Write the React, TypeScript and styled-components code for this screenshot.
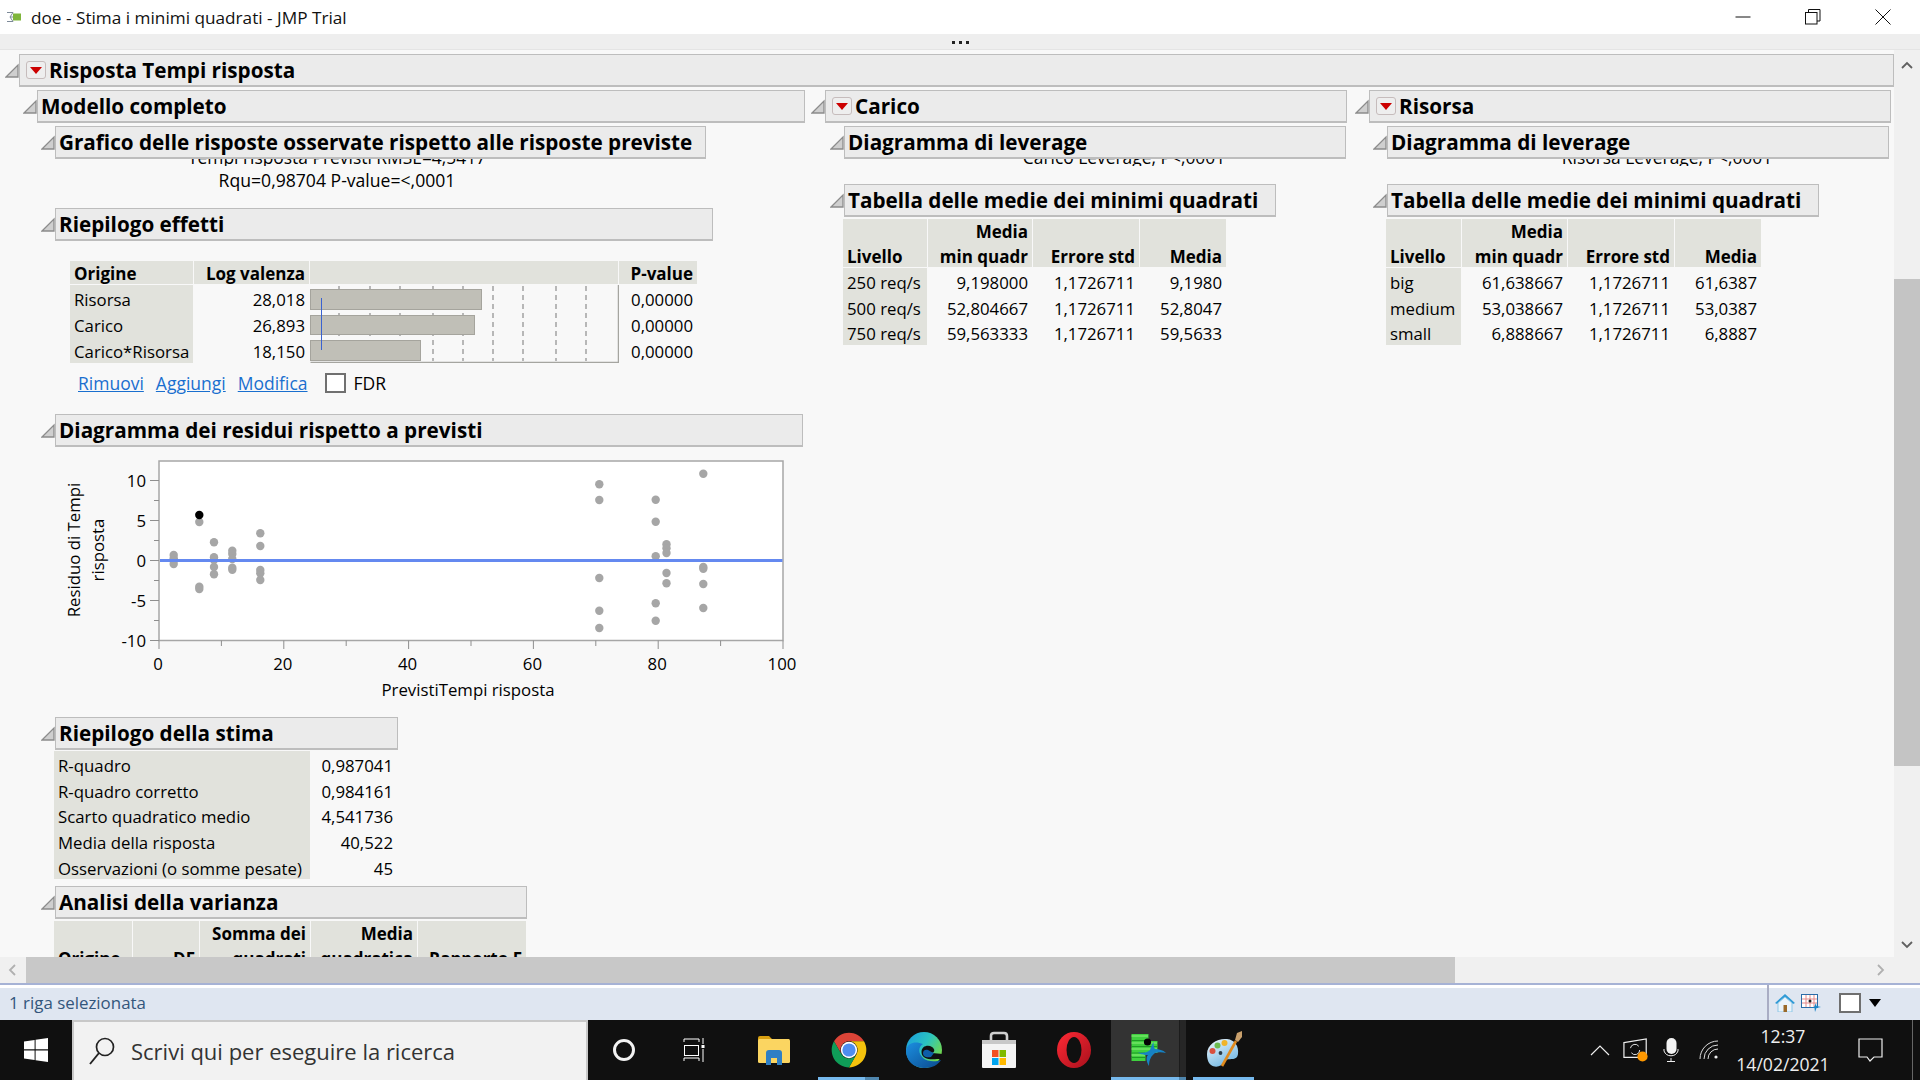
import React from 'react';
import styled, { createGlobalStyle } from 'styled-components';

const GlobalStyle = createGlobalStyle`
  html, body { margin: 0; padding: 0; background: #f8f8f8; }
  body { font-family: "Open Sans", "Noto Sans", sans-serif; color: #000; overflow: hidden; }
`;

const Page = styled.div`
  width: 1920px;
  height: 1080px;
  display: flex;
  flex-direction: column;
  overflow: hidden;
`;

const TitleBar = styled.div`
  height: 34px;
  background: #fff;
  display: flex;
  align-items: center;
  padding-left: 7px;
  font-size: 17.2px;
  flex: none;
`;

const TitleText = styled.span`
  margin-left: 10px;
  color: #111;
`;

const WindowButtons = styled.div`
  margin-left: auto;
  display: flex;
  align-items: center;
  padding-right: 29px;
  gap: 54px;
`;

const ToolStrip = styled.div`
  height: 16px;
  background: #eeeeee;
  border-bottom: 1px solid #e4e4e4;
  flex: none;
  display: flex;
  justify-content: center;
  align-items: flex-end;
  gap: 4px;
  padding-bottom: 5px;
  box-sizing: border-box;
`;

const ToolDot = styled.i`
  width: 3px;
  height: 3px;
  background: #222;
  display: block;
`;

const Main = styled.div`
  height: 907px;
  flex: none;
  display: flex;
`;

const Content = styled.div`
  width: 1894px;
  height: 907px;
  overflow: hidden;
  background: #f8f8f8;
  padding: 4px 0 0 5px;
  box-sizing: border-box;
`;

const VScroll = styled.div`
  width: 26px;
  background: #f0f0f0;
  display: flex;
  flex-direction: column;
  align-items: center;
  padding-top: 11px;
  box-sizing: border-box;
`;

const VThumb = styled.div`
  width: 26px;
  height: 487px;
  background: #c4c4c4;
  margin: 210px 0 175px;
`;

const HScroll = styled.div`
  height: 26px;
  flex: none;
  background: #f0f0f0;
  display: flex;
  align-items: center;
  padding-left: 8px;
  box-sizing: border-box;
`;

const HThumb = styled.div`
  width: 1429px;
  height: 26px;
  background: #c8c8c8;
  margin: 0 422px 0 10px;
`;

const StatusBar = styled.div`
  height: 37px;
  flex: none;
  border-top: 2px solid #a6b2d5;
  box-sizing: border-box;
  background: #fff;
`;

const StatusInner = styled.div`
  height: 32px;
  margin-top: 3px;
  background: #dfe6f1;
  display: flex;
  align-items: center;
  padding-left: 9px;
  font-size: 16.9px;
  color: #34567c;
`;

const StatusText = styled.span`
  margin-bottom: 4px;
`;

const StatusTools = styled.div`
  margin-left: auto;
  width: 153px;
  height: 35px;
  margin-top: -3px;
  border-left: 2px solid #a9adc4;
  box-sizing: border-box;
  display: flex;
  align-items: center;
  padding-left: 6px;
`;

const StatusCheck = styled.div`
  width: 22px;
  height: 20px;
  background: #fff;
  border: 2px solid #6f6f6f;
  box-sizing: border-box;
  margin: 0 8px 0 18px;
`;

const Taskbar = styled.div`
  height: 60px;
  flex: none;
  background: #101010;
  display: flex;
  color: #fff;
  position: relative;
`;

const StartSlot = styled.div`
  width: 72px;
  display: flex;
  align-items: center;
  justify-content: center;
`;

const SearchBox = styled.div`
  width: 516px;
  box-sizing: border-box;
  background: #f2f2f2;
  border: 2px solid #c8c8c8;
  border-bottom: none;
  display: flex;
  align-items: center;
  padding-left: 15px;
  gap: 16px;
  font-size: 22px;
  color: #333;
`;

const TaskSlot = styled.div<{ $w?: number; $on?: boolean; $active?: boolean; $pad?: number }>`
  width: ${(p) => p.$w ?? 75}px;
  box-sizing: border-box;
  padding-right: ${(p) => p.$pad ?? 0}px;
  display: flex;
  align-items: center;
  justify-content: center;
  position: relative;
  background: ${(p) => (p.$active ? '#333' : 'transparent')};
  ${(p) =>
    p.$on
      ? `&::after {
    content: '';
    position: absolute;
    left: ${p.$active ? 0 : 7}px;
    right: ${p.$active ? 0 : 7}px;
    bottom: 0;
    height: 3px;
    background: #76b9ed;
  }`
      : ''}
`;

const StackEdge = styled.span<{ $right: number; $w: number; $tile?: boolean }>`
  position: absolute;
  top: ${(p) => (p.$tile ? 0 : 'auto')};
  bottom: 0;
  right: ${(p) => p.$right}px;
  width: ${(p) => p.$w}px;
  height: ${(p) => (p.$tile ? '100%' : '3px')};
  background: ${(p) => (p.$tile ? '#262626' : '#4f86ae')};
  border-left: ${(p) => (p.$tile ? '1px solid #1c1c1c' : 'none')};
  box-sizing: border-box;
  z-index: 1;
`;

const Tray = styled.div`
  margin-left: auto;
  display: flex;
  align-items: center;
  width: 332px;
  box-sizing: border-box;
  position: relative;
`;

const TrayItem = styled.div<{ $w: number }>`
  width: ${(p) => p.$w}px;
  display: flex;
  align-items: center;
  justify-content: center;
`;

const Clock = styled.div`
  width: 94px;
  text-align: center;
  font-size: 17.6px;
  line-height: 28px;
  color: #eee;
  white-space: nowrap;
`;

const DesktopEdge = styled.div`
  position: absolute;
  right: 7px;
  top: 0;
  bottom: 0;
  width: 1px;
  background: #666;
`;

/* outline tree */
const Row = styled.div<{ $top?: number }>`
  display: flex;
  align-items: center;
  margin-top: ${(p) => p.$top ?? 0}px;
`;

const Bar = styled.div<{ $w: number }>`
  width: ${(p) => p.$w}px;
  height: 33px;
  box-sizing: border-box;
  flex: none;
  background: #ebebeb;
  border: 1px solid #bdbdbd;
  border-bottom-width: 2px;
  padding-left: 3px;
  display: flex;
  align-items: center;
  gap: 3px;
  font-weight: 700;
  font-size: 20.7px;
  white-space: nowrap;
`;

const MenuButton = styled.span`
  width: 20px;
  height: 18px;
  box-sizing: border-box;
  border: 1px solid #c6bcbc;
  border-radius: 3px;
  background: #eee;
  display: flex;
  justify-content: center;
  padding-top: 5px;
  margin-left: 3px;
`;

const Columns = styled.div`
  display: flex;
  margin: 3px 0 0 18px;
`;

const Column = styled.div<{ $w: number }>`
  width: ${(p) => p.$w}px;
  flex: none;
`;

const Indent = styled.div<{ $left: number; $top?: number }>`
  margin-left: ${(p) => p.$left}px;
  margin-top: ${(p) => p.$top ?? 0}px;
`;

const ClipLine = styled.div<{ $left: number; $w: number }>`
  margin-left: ${(p) => p.$left}px;
  width: ${(p) => p.$w}px;
  height: 7px;
  overflow: hidden;
  display: flex;
  justify-content: center;
  align-items: flex-end;
  font-size: 17.4px;
  line-height: 18px;
  white-space: nowrap;
`;

const PlotNote = styled.div`
  margin: 2px 0 0 32px;
  width: 564px;
  text-align: center;
  font-size: 17.6px;
  line-height: 24px;
`;

const Grid = styled.div<{ $cols: string; $left: number; $top?: number; $head?: number; $row?: number }>`
  display: grid;
  grid-template-columns: ${(p) => p.$cols};
  grid-auto-rows: ${(p) => p.$row ?? 25.67}px;
  grid-template-rows: ${(p) => (p.$head ? `${p.$head}px` : 'none')};
  column-gap: 1px;
  margin-left: ${(p) => p.$left}px;
  margin-top: ${(p) => p.$top ?? 0}px;
  width: max-content;
  font-size: 16.8px;
`;

const Head = styled.div<{ $left?: boolean }>`
  background: #e1e2dc;
  font-weight: 700;
  font-size: 17px;
  line-height: 24.5px;
  text-align: ${(p) => (p.$left ? 'left' : 'right')};
  padding: 0 4px;
  margin-bottom: 1px;
  display: flex;
  flex-direction: column;
  justify-content: flex-end;
  white-space: nowrap;
  &::after {
    content: '';
    margin-top: -2px;
  }
`;

const Label = styled.div`
  background: #e1e2dc;
  padding: 1px 4px 0;
  line-height: 27px;
  white-space: nowrap;
  overflow: hidden;
`;

const Num = styled.div`
  text-align: right;
  padding: 1px 4px 0;
  line-height: 27px;
  white-space: nowrap;
`;

const BarCell = styled.div`
  grid-column: 3;
  grid-row: 2 / span 3;
`;

const PlainSvg = styled.svg`
  display: block;
`;

const LinkRow = styled.div`
  display: flex;
  align-items: center;
  margin: 10px 0 0 55px;
  height: 20px;
  font-size: 17.5px;
`;

const Action = styled.a`
  color: #1a6fcf;
  text-decoration: underline;
  margin-right: 12px;
`;

const CheckBox = styled.span`
  width: 21px;
  height: 20px;
  box-sizing: border-box;
  background: #fff;
  border: 2px solid #707070;
  margin: 0 8px 0 5px;
`;

const ChartSvg = styled.svg`
  display: block;
  margin: 3px 0 0 37px;
  font-family: "Open Sans", "Noto Sans", sans-serif;
`;

const ClippedTable = styled.div`
  height: 36px;
  overflow: hidden;
  margin-top: 2px;
`;

function Arrow() {
  return (
    <PlainSvg width="14" height="16" viewBox="0 0 14 16">
      <path d="M1 14 L13 2 L13 14 Z" fill="#cfcfcf" stroke="#8c8c8c" strokeWidth="1.3" />
    </PlainSvg>
  );
}

function Menu() {
  return (
    <MenuButton>
      <PlainSvg width="12" height="7" viewBox="0 0 12 7">
        <path d="M0 0 H12 L6 7 Z" fill="#cc0000" />
      </PlainSvg>
    </MenuButton>
  );
}

function Node(props: { w: number; top?: number; menu?: boolean; children: React.ReactNode }) {
  return (
    <Row $top={props.top}>
      <Arrow />
      <Bar $w={props.w}>
        {props.menu && <Menu />}
        {props.children}
      </Bar>
    </Row>
  );
}

const X = (v: number) => 159 + v * 6.24;
const Y = (v: number) => 560.5 - v * 8;

const dots: [number, number[]][] = [
  [173.7, [555, 558.3, 560.7, 564]],
  [199.3, [522, 586.7, 589]],
  [214, [542.3, 557.3, 560, 567, 574.3]],
  [232.3, [550.7, 554, 559, 567.7, 569.7]],
  [260.3, [533.3, 546, 570, 573.3, 580]],
  [599.3, [484.3, 500, 578, 610.7, 628]],
  [655.7, [499.7, 521.7, 556.3, 603.3, 620.7]],
  [666.5, [544.3, 548.3, 553, 573, 583.3]],
  [703.3, [473.7, 567, 568.7, 584, 608]]
];

function ResidualChart() {
  const xTicks = Array.from({ length: 11 }, (_, i) => i * 10);
  const yTicks = Array.from({ length: 9 }, (_, i) => -10 + i * 2.5);
  return (
    <ChartSvg width="745" height="255" viewBox="60 450 745 255">
      <rect x="159" y="461" width="624" height="179.5" fill="#fff" stroke="#a6a6a6" strokeWidth="1.5" />
      {xTicks.map((v) => (
        <line key={v} x1={X(v)} x2={X(v)} y1="640.5" y2={v % 20 === 0 ? 649 : 646} stroke="#8e8e8e" />
      ))}
      {yTicks.map((v) => (
        <line key={v} x1={v % 5 === 0 ? 150 : 154} x2="159" y1={Y(v)} y2={Y(v)} stroke="#8e8e8e" />
      ))}
      {dots.map(([x, ys]) =>
        ys.map((y) => <circle key={x + '_' + y} cx={x} cy={y} r="4.2" fill="#a6a6a6" />)
      )}
      <rect x="160" y="559" width="622.5" height="3" fill="#6489f0" />
      <circle cx="199.3" cy="515" r="4.2" fill="#000" />
      {[10, 5, 0, -5, -10].map((v) => (
        <text key={v} x="146" y={Y(v) + 6} fontSize="16.8" textAnchor="end">
          {v}
        </text>
      ))}
      {[0, 20, 40, 60, 80, 100].map((v) => (
        <text key={v} x={X(v) - 1} y="670" fontSize="16.8" textAnchor="middle">
          {v}
        </text>
      ))}
      <text x="468" y="696" fontSize="16.8" textAnchor="middle">
        PrevistiTempi risposta
      </text>
      <text transform="translate(80 550) rotate(-90)" fontSize="16.8" textAnchor="middle">
        Residuo di Tempi
      </text>
      <text transform="translate(104 550) rotate(-90)" fontSize="16.8" textAnchor="middle">
        risposta
      </text>
    </ChartSvg>
  );
}

function EffectBars() {
  const guides = [29, 60, 90, 123, 153, 183, 213, 246, 276];
  return (
    <PlainSvg width="309" height="78" viewBox="0 0 309 78">
      {guides.map((x) => (
        <line key={x} x1={x} x2={x} y1="1" y2="76" stroke="#777" strokeDasharray="5 4" />
      ))}
      <rect x="0.5" y="4.5" width="171" height="20" fill="#c0bfb7" stroke="#a5a49d" />
      <rect x="0.5" y="30.5" width="164" height="19" fill="#c0bfb7" stroke="#a5a49d" />
      <rect x="0.5" y="55.5" width="110" height="20" fill="#c0bfb7" stroke="#a5a49d" />
      <line x1="11.5" x2="11.5" y1="13" y2="65" stroke="#3a62d0" />
      <path d="M0.5 77.5 H308.5 V0" fill="none" stroke="#a5a5a0" strokeWidth="1.5" />
    </PlainSvg>
  );
}

function LsTable(props: { cols: string; left: number; rows: string[][] }) {
  return (
    <Grid $cols={props.cols} $left={props.left} $top={2} $head={49}>
      <Head $left>Livello</Head>
      <Head>
        <span>Media</span>
        <span>min quadr</span>
      </Head>
      <Head>Errore std</Head>
      <Head>Media</Head>
      {props.rows.map((r) => (
        <React.Fragment key={r[0]}>
          <Label>{r[0]}</Label>
          <Num>{r[1]}</Num>
          <Num>{r[2]}</Num>
          <Num>{r[3]}</Num>
        </React.Fragment>
      ))}
    </Grid>
  );
}

function ChromeIcon() {
  return (
    <PlainSvg width="36" height="36" viewBox="-18 -18 36 36">
      <path d="M-15 -8.7 A17.4 17.4 0 0 1 15 -8.7 L0 -8.7 A8.7 8.7 0 0 0 -7.5 4.3 Z" fill="#db4437" />
      <path d="M15 -8.7 A17.4 17.4 0 0 1 0 17.4 L7.5 4.3 A8.7 8.7 0 0 0 0 -8.7 Z" fill="#f4c20d" />
      <path d="M0 17.4 A17.4 17.4 0 0 1 -15 -8.7 L-7.5 4.3 A8.7 8.7 0 0 0 7.5 4.3 Z" fill="#0f9d58" />
      <circle r="8.2" fill="#fff" />
      <circle r="6.6" fill="#4f8df0" />
    </PlainSvg>
  );
}

function EdgeIcon() {
  return (
    <PlainSvg width="38" height="38" viewBox="-19 -19 38 38">
      <defs>
        <linearGradient id="edgeTop" x1="0" y1="0" x2="1" y2="0.6">
          <stop offset="0" stopColor="#1a9be0" />
          <stop offset="0.55" stopColor="#2bc4c0" />
          <stop offset="1" stopColor="#74d94a" />
        </linearGradient>
        <linearGradient id="edgeLow" x1="0" y1="0" x2="1" y2="1">
          <stop offset="0" stopColor="#1b8fe0" />
          <stop offset="1" stopColor="#0b4a8f" />
        </linearGradient>
      </defs>
      <circle r="18" fill="url(#edgeTop)" />
      <path d="M-18 0 C-18 13 -8 18 1 18 C8 18 14 15 17 10 C12 12 3 12 -1 8 C-6 3 -6 -3 -1 -6 C-8 -9 -16 -8 -18 0 Z" fill="url(#edgeLow)" />
      <path d="M-2.5 2 C-2.5 -4 4 -5.5 8 -3 C11 -1 11 2 8 3 L19 4 L19 9 L13 9 C6 10 -2.5 9 -2.5 2 Z" fill="#101010" />
      <path d="M-1 3 C-1 0 2 -1 4 0 C6 1 7 2 10 3 L7 7 C3 8 -1 7 -1 3 Z" fill="#0d5ea8" />
    </PlainSvg>
  );
}

function StoreIcon() {
  return (
    <PlainSvg width="36" height="38" viewBox="0 0 36 38">
      <path d="M10 12 V5 Q10 2 13 2 H23 Q26 2 26 5 V12" fill="none" stroke="#cfcfcf" strokeWidth="2.6" />
      <rect x="1" y="9" width="34" height="28" rx="1" fill="#f4f4f4" />
      <rect x="1" y="9" width="34" height="4" fill="#c8c8c8" />
      <rect x="11" y="19" width="6.5" height="7" fill="#f25022" />
      <rect x="18.5" y="19" width="6.5" height="7" fill="#7fba00" />
      <rect x="11" y="27" width="6.5" height="7" fill="#00a4ef" />
      <rect x="18.5" y="27" width="6.5" height="7" fill="#ffb900" />
    </PlainSvg>
  );
}

function OperaIcon() {
  return (
    <PlainSvg width="36" height="38" viewBox="0 0 36 38">
      <defs>
        <linearGradient id="operaRed" x1="0" y1="0" x2="1" y2="1">
          <stop offset="0" stopColor="#ff2a35" />
          <stop offset="1" stopColor="#a8101c" />
        </linearGradient>
      </defs>
      <ellipse cx="18" cy="19" rx="17" ry="18" fill="url(#operaRed)" />
      <ellipse cx="18" cy="19" rx="7.5" ry="13" fill="#101010" />
    </PlainSvg>
  );
}

function JmpIcon() {
  return (
    <PlainSvg width="38" height="36" viewBox="0 0 38 36">
      <path d="M1.5 2 H18.5 V9 H27.5 V21 H15.5 V29 H1.5 Z" fill="#3fd03f" />
      <path d="M1.5 8.5 H18 M1.5 14.5 H27 M1.5 21 H15 M1.5 25.5 H15" stroke="#1f9a25" strokeWidth="1.2" />
      <path d="M1.5 4 H18 M1.5 11 H27 M1.5 17 H27 M1.5 23 H15" stroke="#8cf07a" strokeWidth="1" />
      <circle cx="17.5" cy="10" r="3.6" fill="#050505" />
      <path d="M8 20 C13 22 18 20 20 18 C21 15 22 13 23.5 10 C23.5 14 24 16 25 17 C29 17 33 18 36 21 C32 20 28 20 25 21 C21 24 19 28 19 34 C16 29 16 25 18 23 C15 23 11 23 8 20 Z" fill="#1682c4" />
    </PlainSvg>
  );
}

function PaintIcon() {
  return (
    <PlainSvg width="40" height="40" viewBox="0 0 40 40">
      <defs>
        <linearGradient id="paletteFill" x1="0" y1="0" x2="0.6" y2="1">
          <stop offset="0" stopColor="#f2f8fc" />
          <stop offset="1" stopColor="#74b9e4" />
        </linearGradient>
      </defs>
      <path d="M3 24 C3 14 14 8 23 9 C31 10 35 16 34 24 C33 32 24 27 21 31 C18 37 11 38 7 35 C4 33 3 28 3 24 Z" fill="url(#paletteFill)" />
      <circle cx="8.5" cy="21" r="3" fill="#d9503f" />
      <circle cx="13.5" cy="15.5" r="3" fill="#6cbb4f" />
      <circle cx="20.5" cy="13" r="3" fill="#f0b429" />
      <circle cx="16.5" cy="23" r="1.9" fill="#2a3c4a" />
      <path d="M18 36 L32 11" stroke="#e08a1e" strokeWidth="2.6" />
      <path d="M31 10 L33 3 L38 1 L38 7 L34 12 Z" fill="#c9a06c" />
    </PlainSvg>
  );
}

export default function App() {
  return (
    <Page>
      <GlobalStyle />
      <TitleBar>
        <svg width="14" height="12" viewBox="0 0 14 12">
          <rect x="6" y="2.5" width="8" height="7" fill="#7fb53c" />
          <path d="M0 1.5 H6 L3 6 H6 M0 10.5 H6 L3 6" fill="none" stroke="#7d8a99" strokeWidth="1" />
        </svg>
        <TitleText>doe - Stima i minimi quadrati - JMP Trial</TitleText>
        <WindowButtons>
          <svg width="16" height="16" viewBox="0 0 16 16">
            <line x1="0.5" x2="15.5" y1="8" y2="8" stroke="#111" strokeWidth="1" />
          </svg>
          <svg width="16" height="16" viewBox="0 0 16 16">
            <rect x="0.5" y="3.5" width="11.5" height="11.5" fill="none" stroke="#111" />
            <path d="M3.5 3.5 V0.5 H15 V12 H12" fill="none" stroke="#111" />
          </svg>
          <svg width="16" height="16" viewBox="0 0 16 16">
            <path d="M0.5 0.5 L15.5 15.5 M15.5 0.5 L0.5 15.5" stroke="#111" strokeWidth="1" />
          </svg>
        </WindowButtons>
      </TitleBar>
      <ToolStrip>
        <ToolDot />
        <ToolDot />
        <ToolDot />
      </ToolStrip>
      <Main>
        <Content>
          <Node w={1875} menu>
            Risposta Tempi risposta
          </Node>
          <Columns>
            <Column $w={788}>
              <Node w={768}>Modello completo</Node>
              <Indent $left={18} $top={3}>
                <Node w={651}>Grafico delle risposte osservate rispetto alle risposte previste</Node>
              </Indent>
              <ClipLine $left={32} $w={564}>
                Tempi risposta Previsti RMSE=4,5417
              </ClipLine>
              <PlotNote>Rqu=0,98704 P-value=&lt;,0001</PlotNote>
              <Indent $left={18} $top={16}>
                <Node w={658}>Riepilogo effetti</Node>
              </Indent>
              <Grid $cols="123px 115px 308px 78px" $left={47} $top={20} $head={24} $row={26}>
                <Head $left>Origine</Head>
                <Head>Log valenza</Head>
                <Head />
                <Head>P-value</Head>
                <BarCell>
                  <EffectBars />
                </BarCell>
                <Label>Risorsa</Label>
                <Num>28,018</Num>
                <Num>0,00000</Num>
                <Label>Carico</Label>
                <Num>26,893</Num>
                <Num>0,00000</Num>
                <Label>Carico*Risorsa</Label>
                <Num>18,150</Num>
                <Num>0,00000</Num>
              </Grid>
              <LinkRow>
                <Action>Rimuovi</Action>
                <Action>Aggiungi</Action>
                <Action>Modifica</Action>
                <CheckBox />
                FDR
              </LinkRow>
              <Indent $left={18} $top={21}>
                <Node w={748}>Diagramma dei residui rispetto a previsti</Node>
              </Indent>
              <ResidualChart />
              <Indent $left={18} $top={12}>
                <Node w={343}>Riepilogo della stima</Node>
              </Indent>
              <Grid $cols="256px 86px" $left={31} $top={1}>
                <Label>R-quadro</Label>
                <Num>0,987041</Num>
                <Label>R-quadro corretto</Label>
                <Num>0,984161</Num>
                <Label>Scarto quadratico medio</Label>
                <Num>4,541736</Num>
                <Label>Media della risposta</Label>
                <Num>40,522</Num>
                <Label>Osservazioni (o somme pesate)</Label>
                <Num>45</Num>
              </Grid>
              <Indent $left={18} $top={7}>
                <Node w={472}>Analisi della varianza</Node>
              </Indent>
              <ClippedTable>
                <Grid $cols="78px 66px 110px 106px 108px" $left={31} $head={49}>
                  <Head $left>Origine</Head>
                  <Head>DF</Head>
                  <Head>
                    <span>Somma dei</span>
                    <span>quadrati</span>
                  </Head>
                  <Head>
                    <span>Media</span>
                    <span>quadratica</span>
                  </Head>
                  <Head>Rapporto F</Head>
                </Grid>
              </ClippedTable>
            </Column>
            <Column $w={544}>
              <Node w={522} menu>
                Carico
              </Node>
              <Indent $left={19} $top={3}>
                <Node w={502}>Diagramma di leverage</Node>
              </Indent>
              <ClipLine $left={33} $w={560}>
                Carico Leverage, P&lt;,0001
              </ClipLine>
              <Indent $left={19} $top={18}>
                <Node w={432}>Tabella delle medie dei minimi quadrati</Node>
              </Indent>
              <LsTable
                cols="84px 104px 106px 86px"
                left={32}
                rows={[
                  ['250 req/s', '9,198000', '1,1726711', '9,1980'],
                  ['500 req/s', '52,804667', '1,1726711', '52,8047'],
                  ['750 req/s', '59,563333', '1,1726711', '59,5633']
                ]}
              />
            </Column>
            <Column $w={536}>
              <Node w={522} menu>
                Risorsa
              </Node>
              <Indent $left={18} $top={3}>
                <Node w={502}>Diagramma di leverage</Node>
              </Indent>
              <ClipLine $left={32} $w={560}>
                Risorsa Leverage, P&lt;,0001
              </ClipLine>
              <Indent $left={18} $top={18}>
                <Node w={432}>Tabella delle medie dei minimi quadrati</Node>
              </Indent>
              <LsTable
                cols="75px 105px 106px 86px"
                left={31}
                rows={[
                  ['big', '61,638667', '1,1726711', '61,6387'],
                  ['medium', '53,038667', '1,1726711', '53,0387'],
                  ['small', '6,888667', '1,1726711', '6,8887']
                ]}
              />
            </Column>
          </Columns>
        </Content>
        <VScroll>
          <svg width="12" height="8" viewBox="0 0 12 8">
            <path d="M1 7 L6 2 L11 7" fill="none" stroke="#606060" strokeWidth="1.8" />
          </svg>
          <VThumb />
          <svg width="12" height="8" viewBox="0 0 12 8">
            <path d="M1 1 L6 6 L11 1" fill="none" stroke="#606060" strokeWidth="1.8" />
          </svg>
        </VScroll>
      </Main>
      <HScroll>
        <svg width="8" height="12" viewBox="0 0 8 12">
          <path d="M7 1 L2 6 L7 11" fill="none" stroke="#b0b0b0" strokeWidth="1.8" />
        </svg>
        <HThumb />
        <svg width="8" height="12" viewBox="0 0 8 12">
          <path d="M1 1 L6 6 L1 11" fill="none" stroke="#b0b0b0" strokeWidth="1.8" />
        </svg>
      </HScroll>
      <StatusBar>
        <StatusInner>
          <StatusText>1 riga selezionata</StatusText>
          <StatusTools>
            <svg width="20" height="18" viewBox="0 0 20 18">
              <path d="M0 9 L10 0 L20 9 L18 10 L10 3 L2 10 Z" fill="#2f9ad6" />
              <path d="M3 9 L10 3 L17 9 V18 H3 Z" fill="#eaf4fb" stroke="#8fc7e6" />
              <rect x="8.5" y="11" width="3.5" height="7" fill="#9a6a2a" />
            </svg>
            <svg width="20" height="18" viewBox="0 0 20 18" style={{ marginLeft: 6 }}>
              <rect x="0.5" y="0.5" width="16" height="13" fill="#fff" stroke="#2b6ca8" />
              <path d="M1 5 H16 M1 9 H16 M5 1 V13 M9 1 V13 M13 1 V13" stroke="#e58a8a" strokeWidth="1" />
              <circle cx="9" cy="7" r="1.5" fill="#222" />
              <path d="M9 13 H13 L15 9 L15.5 12 L20 13 L15.5 14 L14 18 L13.5 14 Z" fill="#1b86c8" />
            </svg>
            <StatusCheck />
            <svg width="12" height="8" viewBox="0 0 12 8">
              <path d="M0 0 H12 L6 8 Z" fill="#000" />
            </svg>
          </StatusTools>
        </StatusInner>
      </StatusBar>
      <Taskbar>
        <StartSlot>
          <svg width="24" height="24" viewBox="0 0 24 24">
            <path d="M0 3.4 L10.6 2 V11.3 H0 Z M11.6 1.8 L24 0 V11.3 H11.6 Z M0 12.5 H10.6 V22 L0 20.6 Z M11.6 12.5 H24 V24 L11.6 22.2 Z" fill="#fff" />
          </svg>
        </StartSlot>
        <SearchBox>
          <svg width="26" height="29" viewBox="0 0 26 29">
            <circle cx="16" cy="10" r="8.5" fill="none" stroke="#222" strokeWidth="1.7" />
            <line x1="10" y1="16" x2="1" y2="27" stroke="#222" strokeWidth="1.9" />
          </svg>
          Scrivi qui per eseguire la ricerca
        </SearchBox>
        <TaskSlot $w={72}>
          <svg width="24" height="24" viewBox="0 0 24 24">
            <circle cx="12" cy="12" r="9.5" fill="none" stroke="#f2f2f2" strokeWidth="3" />
          </svg>
        </TaskSlot>
        <TaskSlot $w={76} $pad={6}>
          <svg width="24" height="24" viewBox="0 0 24 24">
            <path d="M1 4 V1 H16 V4 M1 23 V20 H16 V23 M20 0 V6 M20 11 V24" fill="none" stroke="#fff" />
            <rect x="1.5" y="7.5" width="14" height="10" fill="none" stroke="#fff" />
            <rect x="18.5" y="7" width="3" height="3" fill="#fff" />
          </svg>
        </TaskSlot>
        <TaskSlot>
          <svg width="33" height="29" viewBox="0 0 33 29">
            <path d="M1 2 Q1 0 3 0 H12 L15 3 H32 V6 H1 Z" fill="#d9a011" />
            <rect x="1" y="3" width="32" height="24" rx="1.5" fill="#fbd561" />
            <path d="M9 29 V17 Q9 14 12 14 H22 Q25 14 25 17 V29 H20 V22 H14 V29 Z" fill="#2f7fc4" />
          </svg>
        </TaskSlot>
        <TaskSlot $on>
          <ChromeIcon />
          <StackEdge $right={7} $w={14} />
        </TaskSlot>
        <TaskSlot>
          <EdgeIcon />
        </TaskSlot>
        <TaskSlot>
          <StoreIcon />
        </TaskSlot>
        <TaskSlot>
          <OperaIcon />
        </TaskSlot>
        <TaskSlot $on $active>
          <JmpIcon />
          <StackEdge $right={0} $w={7} $tile />
          <StackEdge $right={0} $w={7} />
        </TaskSlot>
        <TaskSlot $on>
          <PaintIcon />
        </TaskSlot>
        <Tray>
          <TrayItem $w={24}>
            <svg width="20" height="11" viewBox="0 0 20 11">
              <path d="M1 10 L10 1 L19 10" fill="none" stroke="#eee" strokeWidth="1.2" />
            </svg>
          </TrayItem>
          <TrayItem $w={48}>
            <svg width="26" height="26" viewBox="0 0 28 26">
              <path d="M1 5 L25 1 V21 H1 Z" fill="none" stroke="#eee" strokeWidth="1.3" />
              <path d="M8 11 A5 5 0 0 1 17 9 M18 13 A5 5 0 0 1 9 16" fill="none" stroke="#eee" />
              <circle cx="21" cy="20" r="5.5" fill="#ff9800" />
            </svg>
          </TrayItem>
          <TrayItem $w={22}>
            <svg width="16" height="24" viewBox="0 0 16 24">
              <rect x="3.5" y="0" width="10" height="16" rx="5" fill="#f2f2f2" />
              <path d="M1 11 V13 A7.5 7.5 0 0 0 15 13 V11 M8 20 V23 M4 23.5 H12" fill="none" stroke="#eee" />
            </svg>
          </TrayItem>
          <TrayItem $w={54}>
            <svg width="20" height="20" viewBox="0 0 20 20">
              <path d="M1 19 A18 18 0 0 1 19 1 M5 19 A14 14 0 0 1 19 5 M9 19 A10 10 0 0 1 19 9" fill="none" stroke="#ddd" />
              <circle cx="17" cy="17" r="1.6" fill="#eee" />
            </svg>
          </TrayItem>
          <Clock>
            12:37
            <br />
            14/02/2021
          </Clock>
          <TrayItem $w={80}>
            <svg width="25" height="24" viewBox="0 0 25 24">
              <path d="M1 1 H24 V19 H16 L12 23 L9 19 H1 Z" fill="none" stroke="#eee" strokeWidth="1.2" />
            </svg>
          </TrayItem>
          <DesktopEdge />
        </Tray>
      </Taskbar>
    </Page>
  );
}
